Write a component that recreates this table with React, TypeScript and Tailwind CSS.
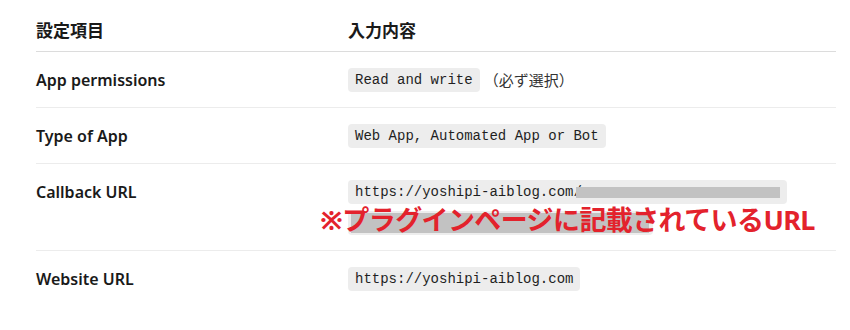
import React from 'react';

const sans = "font-['Noto_Sans','Noto_Sans_CJK_JP',sans-serif]";
const mono = "font-['Liberation_Mono',monospace]";

function Code({ children }: { children: React.ReactNode }) {
  return (
    <span className={`${mono} inline-block h-6 rounded-[4px] bg-[#ededed] px-[7px] align-top text-[14px] leading-6 text-[#1f1f1f]`}>
      {children}
    </span>
  );
}

export default function App() {
  return (
    <div className={`${sans} h-[330px] w-[850px] overflow-hidden bg-white text-[#1a1a1a]`}>
      <table className="ml-[36px] w-[800px] border-collapse">
        <thead>
          <tr className="border-b border-[#dcdcdc]">
            <th className="w-[312px] pt-[19px] pb-[8px] text-left text-[17px] font-bold leading-6">設定項目</th>
            <th className="pt-[19px] pb-[8px] text-left text-[17px] font-bold leading-6">入力内容</th>
          </tr>
        </thead>
        <tbody>
          <tr className="border-b border-[#ececec]">
            <td className="pt-4 pb-[15px] align-top text-[16px] font-semibold leading-6">App permissions</td>
            <td className="pt-4 pb-[15px] align-top leading-6">
              <div className="flex h-6 items-center">
                <Code>Read and write</Code>
                <span className="ml-[4px] text-[15px] text-[#333]">（必ず選択）</span>
              </div>
            </td>
          </tr>
          <tr className="border-b border-[#ececec]">
            <td className="pt-4 pb-[15px] align-top text-[16px] font-semibold leading-6">Type of App</td>
            <td className="pt-4 pb-[15px] align-top leading-6">
              <div className="flex h-6 items-center">
                <Code>Web App, Automated App or Bot</Code>
              </div>
            </td>
          </tr>
          <tr className="border-b border-[#ececec]">
            <td className="pt-4 pb-[15px] align-top text-[16px] font-semibold leading-6">Callback URL</td>
            <td className="relative pt-4 pb-[15px] align-top leading-6">
              <div className="flex flex-col items-start gap-[7px]">
                <Code>
                  <span className="flex h-6 items-center">
                    https://yoshipi-aiblog.com/
                    <span className="-ml-[6px] inline-block h-[11px] w-[204px] bg-[#c2c2c2]" />
                  </span>
                </Code>
                <span className="inline-flex h-6 w-[305px] items-center rounded-[4px] bg-[#ededed] pl-[3px]">
                  <span className="h-[20px] w-[298px] bg-[#c2c2c2]" />
                </span>
              </div>
              <div className="absolute left-[-28px] top-[40px] whitespace-nowrap text-[27px] font-bold leading-8 tracking-[-0.6px] text-[#e3222c]">
                ※プラグインページに記載されているURL
              </div>
            </td>
          </tr>
          <tr>
            <td className="pt-4 pb-[15px] align-top text-[16px] font-semibold leading-6">Website URL</td>
            <td className="pt-4 pb-[15px] align-top leading-6">
              <div className="flex h-6 items-center">
                <Code>https://yoshipi-aiblog.com</Code>
              </div>
            </td>
          </tr>
        </tbody>
      </table>
    </div>
  );
}
